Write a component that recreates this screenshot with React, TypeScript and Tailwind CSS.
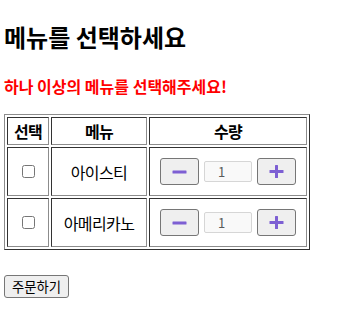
import React, { useState } from 'react';

type Item = { id: number; name: string };

const ITEMS: Item[] = [
  { id: 1, name: '아이스티' },
  { id: 2, name: '아메리카노' },
];

const MinusIcon = () => (
  <svg width="15" height="4" viewBox="0 0 15 4">
    <rect x="0.5" y="0.5" width="14" height="3" rx="0.5" fill="#7d5fd3" />
  </svg>
);

const PlusIcon = () => (
  <svg width="15" height="13" viewBox="0 0 15 13">
    <rect x="0.5" y="5" width="14" height="3" rx="0.5" fill="#7d5fd3" />
    <rect x="6" y="0" width="3" height="13" rx="0.5" fill="#7d5fd3" />
  </svg>
);

const cellBorder =
  'border border-t-[#333] border-l-[#333] border-r-[#8c8c8c] border-b-[#8c8c8c] p-0';

const App: React.FC = () => {
  const [checked, setChecked] = useState<Record<number, boolean>>({});
  const [qty] = useState<Record<number, number>>({ 1: 1, 2: 1 });

  return (
    <div className="min-h-screen bg-white pl-1 pt-[23px] font-['Noto_Sans_CJK_KR',sans-serif] text-black">
      {/* Title */}
      <h2 className="h-[28px] text-[24px] leading-[28px] font-bold">
        메뉴를 선택하세요
      </h2>

      {/* Warning */}
      <p className="mt-[25px] h-[20px] text-[16px] leading-[20px] font-bold text-[#ff0000]">
        하나 이상의 메뉴를 선택해주세요!
      </p>

      {/* Menu table */}
      <table className="mt-[18px] border-separate border-spacing-[2px] border border-t-[#8c8c8c] border-l-[#8c8c8c] border-r-[#333] border-b-[#333] text-[16px] tracking-[-0.6px]">
        <thead>
          <tr>
            <th className={`${cellBorder} w-[42px] h-[28px] font-bold`}>선택</th>
            <th className={`${cellBorder} w-[96px] h-[28px] font-bold`}>메뉴</th>
            <th className={`${cellBorder} w-[158px] h-[28px] font-bold`}>수량</th>
          </tr>
        </thead>
        <tbody>
          {ITEMS.map((item) => (
            <tr key={item.id}>
              <td className={`${cellBorder} h-[49px] text-center`}>
                <div className="flex items-center justify-center">
                  <input
                    type="checkbox"
                    className="m-0 h-[13px] w-[13px]"
                    checked={!!checked[item.id]}
                    onChange={() => setChecked({ ...checked, [item.id]: !checked[item.id] })}
                  />
                </div>
              </td>
              <td className={`${cellBorder} h-[49px] text-center`}>{item.name}</td>
              <td className={`${cellBorder} h-[49px]`}>
                <div className="flex items-center justify-center gap-[5px] tracking-normal">
                  <button className="flex h-[27px] w-[39px] items-center justify-center rounded-[3px] border border-[#767676] bg-[#efefef]">
                    <MinusIcon />
                  </button>
                  <input
                    readOnly
                    value={qty[item.id]}
                    className="h-[21px] w-[48px] rounded-[2px] border border-[#d6d6d6] bg-[#f9f9f9] pl-[13px] text-[13px] text-[#5a5a5a] outline-none"
                  />
                  <button className="flex h-[27px] w-[39px] items-center justify-center rounded-[3px] border border-[#767676] bg-[#efefef]">
                    <PlusIcon />
                  </button>
                </div>
              </td>
            </tr>
          ))}
        </tbody>
      </table>

      {/* Order */}
      <button className="mt-[25px] flex h-[23px] w-[65px] items-center justify-center rounded-[3px] border border-[#767676] bg-[#efefef] text-[13.33px]">
        주문하기
      </button>
    </div>
  );
};

export default App;
